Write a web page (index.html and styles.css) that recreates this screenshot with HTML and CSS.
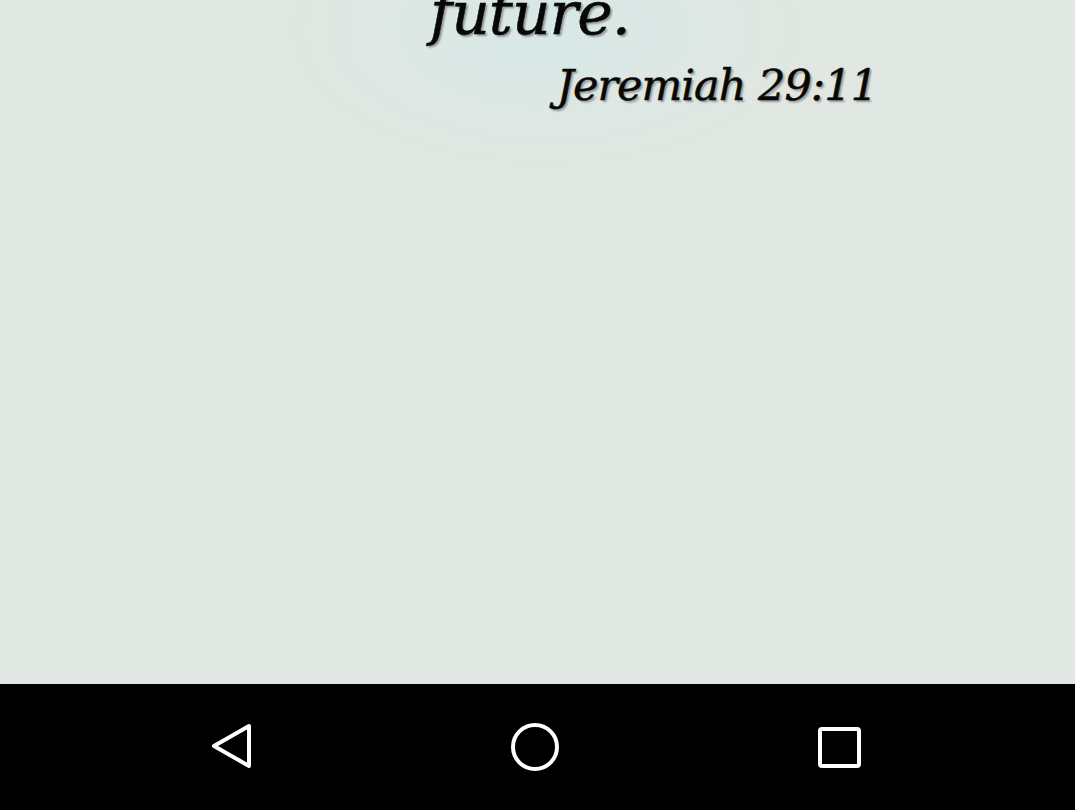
FILE: index.html
```html
<!DOCTYPE html>
<html>
<head>
<meta charset="utf-8">
<link rel="stylesheet" href="styles.css">
</head>
<body>
<div class="screen">
  <main class="wallpaper">
    <div class="quote">
      <p class="line">future.</p>
      <p class="ref">Jeremiah 29:11</p>
    </div>
  </main>
  <nav class="navbar">
    <svg class="nav-icon" width="60" height="60" viewBox="0 0 60 60">
      <path d="M13 29 L48 9 L48 49 Z" fill="none" stroke="#fff" stroke-width="4" stroke-linejoin="round"/>
    </svg>
    <svg class="nav-icon" width="60" height="60" viewBox="0 0 60 60">
      <circle cx="30" cy="30" r="22" fill="none" stroke="#fff" stroke-width="4"/>
    </svg>
    <svg class="nav-icon" width="60" height="60" viewBox="0 0 60 60">
      <rect x="11" y="12" width="39" height="37" rx="2" fill="none" stroke="#fff" stroke-width="4"/>
    </svg>
  </nav>
</div>
</body>
</html>
```

FILE: styles.css
```css
html, body {
  margin: 0;
  padding: 0;
  overflow: hidden;
}

.screen {
  width: 1075px;
  height: 810px;
  display: flex;
  flex-direction: column;
}

.wallpaper {
  flex: 1;
  background:
    radial-gradient(ellipse 280px 150px at 545px 30px, rgba(214, 232, 230, 1) 0%, rgba(218, 232, 229, 0.55) 50%, rgba(225, 231, 227, 0) 100%),
    #e1e7e3;
  overflow: hidden;
}

.quote {
  font-family: "DejaVu Serif", "Liberation Serif", serif;
  font-style: italic;
  color: #080808;
  text-shadow: 2px 2px 2px rgba(0, 0, 0, 0.35);
  -webkit-text-stroke: 0.5px #080808;
}

.line {
  margin: -23px 0 0 430px;
  font-size: 60px;
  line-height: 72px;
  letter-spacing: -1px;
}

.ref {
  margin: 8px 198px 0 0;
  text-align: right;
  font-size: 43px;
  line-height: 56px;
  letter-spacing: -1px;
}

.navbar {
  height: 126px;
  flex: none;
  background: #000;
  display: flex;
  align-items: center;
  justify-content: center;
  gap: 244px;
  padding-right: 6px;
}

.nav-icon {
  display: block;
}
```
